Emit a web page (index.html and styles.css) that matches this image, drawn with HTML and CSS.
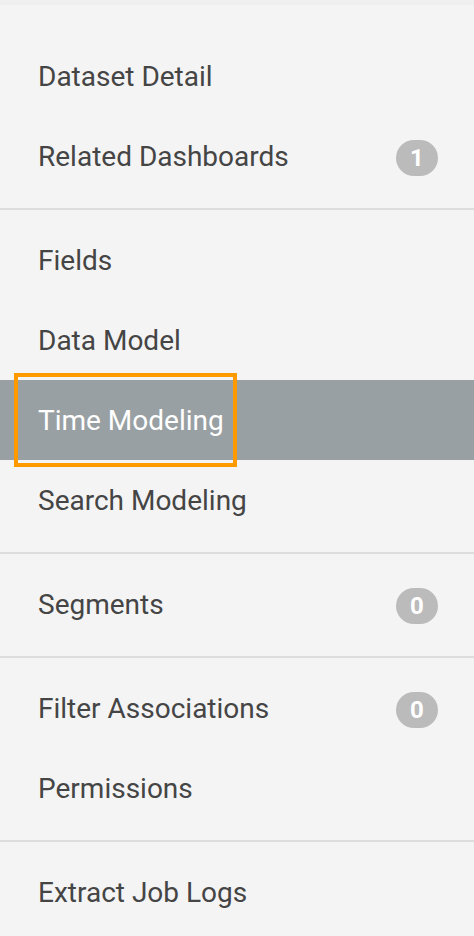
FILE: index.html
```html
<!DOCTYPE html>
<html lang="en">
<head>
<meta charset="utf-8">
<title>Dataset navigation</title>
<link rel="stylesheet" href="styles.css">
</head>
<body>
<nav class="sidenav">
  <div class="topstrip"></div>
  <div class="section section-first">
    <a class="item" href="#"><span class="label">Dataset Detail</span></a>
    <a class="item" href="#"><span class="label">Related Dashboards</span><span class="badge">1</span></a>
  </div>
  <div class="section">
    <a class="item" href="#"><span class="label">Fields</span></a>
    <a class="item" href="#"><span class="label">Data Model</span></a>
    <a class="item active focused" href="#"><span class="label">Time Modeling</span></a>
    <a class="item" href="#"><span class="label">Search Modeling</span></a>
  </div>
  <div class="section">
    <a class="item" href="#"><span class="label">Segments</span><span class="badge">0</span></a>
  </div>
  <div class="section">
    <a class="item" href="#"><span class="label">Filter Associations</span><span class="badge">0</span></a>
    <a class="item" href="#"><span class="label">Permissions</span></a>
  </div>
  <div class="section section-last">
    <a class="item" href="#"><span class="label">Extract Job Logs</span></a>
  </div>
</nav>
</body>
</html>
```
FILE: styles.css
```css
html, body {
  margin: 0;
  padding: 0;
  background: #f4f4f4;
}

body {
  font-family: Roboto, "Noto Sans", "Liberation Sans", sans-serif;
  overflow: hidden;
}

.sidenav {
  display: flex;
  flex-direction: column;
  width: 474px;
}

.topstrip {
  height: 5px;
  background: #efefef;
}

.section {
  display: flex;
  flex-direction: column;
  padding: 10px 0 12px;
  border-bottom: 2px solid #dddddd;
}

.section-first {
  padding-top: 31px;
}

.section-last {
  border-bottom: none;
}

.item {
  position: relative;
  display: flex;
  align-items: center;
  justify-content: space-between;
  height: 80px;
  padding: 0 36px 0 38px;
  color: #454545;
  text-decoration: none;
  font-size: 28px;
}

.item.active {
  background: #99a0a3;
  color: #ffffff;
}

.item.focused::after {
  content: "";
  position: absolute;
  left: 14px;
  top: -7px;
  width: 215px;
  height: 86px;
  border: 4px solid #ff9900;
}

.badge {
  display: flex;
  align-items: center;
  justify-content: center;
  width: 42px;
  height: 36px;
  margin-top: 4px;
  border-radius: 18px;
  background: #bbbbbb;
  color: #ffffff;
  font-size: 24px;
  font-weight: 700;
}
```
